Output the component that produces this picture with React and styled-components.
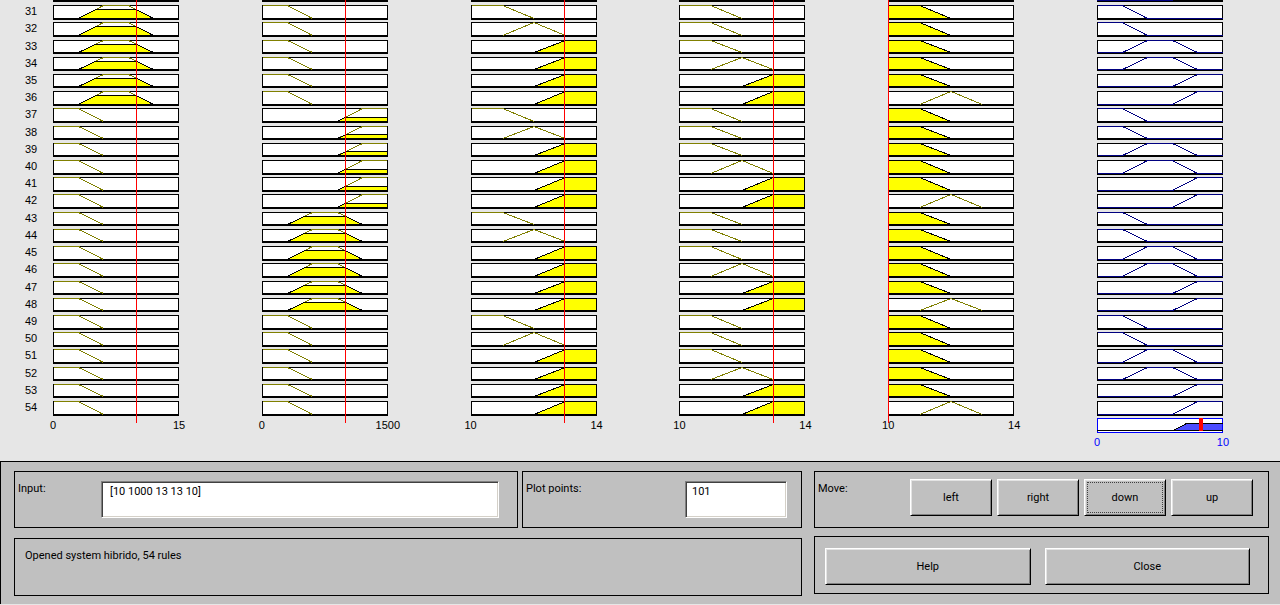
import React from "react";
import styled, { createGlobalStyle, css } from "styled-components";

const GlobalStyle = createGlobalStyle`
  *, *::before, *::after { box-sizing: border-box; }
  body {
    margin: 0;
    background: #e6e6e6;
    color: #000;
    font-family: "Liberation Sans", Arial, sans-serif;
    font-size: 11px;
    line-height: 14px;
  }
`;

const PLOT_WIDTH = 126;
const FIRST_RULE = 31;
const RULE_COUNT = 24;

/* Rules are spread evenly and rounded to whole pixels. */
const topOf = (i) => Math.round(5.08 + 17.217 * i);
const bottomOf = (i) => Math.round(19.61 + 17.217 * i);

const ROWS = Array.from({ length: RULE_COUNT }, (_, i) => ({
  rule: FIRST_RULE + i,
  height: bottomOf(i) - topOf(i),
  space: i < RULE_COUNT - 1 ? topOf(i + 1) - bottomOf(i) : 2,
}));

/* Membership functions as [position, degree] pairs, both from 0 to 1. */
const WIDE = {
  low: [[0, 1], [0.2, 1], [0.4, 0]],
  mid: [[0.2, 0], [0.4, 1], [0.6, 1], [0.8, 0]],
  high: [[0.6, 0], [0.8, 1], [1, 1]],
};
const NARROW = {
  low: [[0, 1], [0.25, 1], [0.5, 0]],
  mid: [[0.25, 0], [0.5, 1], [0.75, 0]],
  high: [[0.5, 0], [0.75, 1], [1, 1]],
};
const OUTPUT = {
  low: [[0, 1], [0.2, 1], [0.4, 0], [1, 0]],
  mid: [[0, 0], [0.2, 0], [0.4, 1], [0.6, 1], [0.8, 0], [1, 0]],
  high: [[0, 0], [0.6, 0], [0.8, 1], [1, 1]],
};

const cycle = (names) => Array.from({ length: RULE_COUNT }, (_, i) => names[i % names.length]);
const blocks = (names) => names.flatMap((name) => Array(6).fill(name));

const INPUTS = [
  { min: "0", max: "15", shapes: WIDE, marker: 83, fire: { mid: 2 / 3 }, terms: blocks(["mid", "low", "low", "low"]) },
  { min: "0", max: "1500", shapes: WIDE, marker: 83, fire: { mid: 2 / 3, high: 1 / 3 }, terms: blocks(["low", "high", "mid", "low"]) },
  { min: "10", max: "14", shapes: NARROW, marker: 93, fire: { high: 1 }, terms: cycle(["low", "mid", "high", "high", "high", "high"]) },
  { min: "10", max: "14", shapes: NARROW, marker: 94, fire: { high: 1 }, terms: cycle(["low", "low", "low", "mid", "high", "high"]) },
  { min: "10", max: "14", shapes: NARROW, marker: 0, fire: { low: 1 }, terms: cycle(["low", "low", "low", "low", "low", "mid"]) },
];
const OUTPUT_TERMS = cycle(["low", "low", "mid", "mid", "high", "high"]);

/* Cuts a membership function at a firing level. */
function clipAt(points, level) {
  const out = [];
  points.forEach(([x, y], i) => {
    if (i > 0) {
      const [px, py] = points[i - 1];
      if ((py - level) * (y - level) < 0) {
        out.push([px + ((x - px) * (level - py)) / (y - py), level]);
      }
    }
    out.push([x, Math.min(y, level)]);
  });
  return out;
}

const toPath = (points, h) =>
  points
    .map(([x, y], i) => `${i ? "L" : "M"}${0.5 + x * 125} ${0.5 + (1 - y) * (h - 2)}`)
    .join(" ");

const Window = styled.main`
  min-width: 1000px;
`;

const Charts = styled.section`
  display: flex;
  justify-content: space-between;
  min-height: 461px;
  padding: 0 57px 0 0;
`;

const RuleNumbers = styled.ol`
  list-style: none;
  width: 53px;
  margin: 0;
  padding: 4px 0 0 25px;
`;

const RuleNumber = styled.li`
  height: ${(p) => p.$height}px;
  margin-bottom: ${(p) => p.$space}px;
`;

const Columns = styled.div`
  flex: 1;
  display: flex;
  justify-content: space-between;
`;

const Column = styled.div`
  position: relative;
  width: ${PLOT_WIDTH}px;
`;

const Plot = styled.svg`
  display: block;
  margin-bottom: ${(p) => p.$space}px;
  shape-rendering: crispEdges;
`;

const Marker = styled.div`
  position: absolute;
  top: 0;
  left: ${(p) => p.$at}px;
  width: 1px;
  height: 423px;
  background: #f00;
`;

const Axis = styled.div`
  display: flex;
  justify-content: space-between;
  margin: 0 -20px;
  padding-top: ${(p) => (p.$output ? 2 : 0)}px;
  color: ${(p) => (p.$output ? "#00f" : "#000")};
`;

const Tick = styled.span`
  width: 40px;
  text-align: center;
`;

const Panel = styled.form`
  display: flex;
  align-items: flex-start;
  gap: 12px;
  padding: 9px 11px 8px 13px;
  background: #c0c0c0;
  border: solid #000;
  border-width: 1px 0 0 1px;
  box-shadow: 0 1px #d4d0c8;
  font-family: Roboto, "Liberation Sans", Arial, sans-serif;
`;

const Side = styled.div`
  flex: ${(p) => p.$grow} 1 0;
  display: flex;
  flex-direction: column;
  gap: ${(p) => p.$gap}px;
`;

const FrameRow = styled.div`
  display: grid;
  grid-template-columns: minmax(0, 504fr) minmax(0, 280fr);
  gap: 4px;
`;

const Frame = styled.div`
  display: flex;
  align-items: flex-start;
  min-height: 57px;
  padding: 9px ${(p) => p.$end}px 0 3px;
  border: 1px solid #000;
`;

const MoveFrame = styled(Frame)`
  padding-top: 7px;
`;

const Caption = styled.label`
  width: ${(p) => p.$width}px;
  padding-top: 1px;
`;

const MoveCaption = styled.span`
  flex: 1;
  padding-top: 3px;
`;

const Field = styled.input`
  flex: ${(p) => (p.$width ? "none" : 1)};
  width: ${(p) => (p.$width ? `${p.$width}px` : "auto")};
  min-width: 0;
  height: 37px;
  margin: 0 0 0 auto;
  padding: 2px 6px 19px;
  border: 1px solid;
  border-color: #808080 #fff #fff #808080;
  border-radius: 0;
  outline: none;
  background: #fff;
  box-shadow: inset 1px 1px #404040, inset -1px -1px #d4d0c8;
  font: inherit;
  color: inherit;
  ${(p) => !p.$width && css`padding-left: 8px;`}
`;

const Status = styled.output`
  display: block;
  min-height: 58px;
  padding: 10px;
  border: 1px solid #000;
`;

const Actions = styled.div`
  display: flex;
  gap: 14px;
  min-height: 58px;
  padding: 11px 18px 8px 10px;
  border: 1px solid #000;
`;

const ButtonGroup = styled.div`
  display: flex;
  gap: 5px;
`;

const Button = styled.button`
  flex: 1;
  min-width: 82px;
  height: 37px;
  margin: 0;
  padding: 0;
  border: 1px solid;
  border-color: #fff #000 #000 #fff;
  border-radius: 0;
  background: #c0c0c0;
  box-shadow: inset 1px 1px #e3e3e3, inset -1px -1px #808080;
  font: inherit;
  color: inherit;
  ${(p) =>
    p.$focused &&
    css`
      outline: 1px dotted #404040;
      outline-offset: -4px;
    `}
`;

function RulePlot({ shape, row, level = 0, color }) {
  const h = row.height;
  const cut = clipAt(shape, level);
  const first = shape[0][0];
  const last = shape[shape.length - 1][0];
  return (
    <Plot width={PLOT_WIDTH} height={h} $space={row.space} aria-hidden="true">
      <rect width={PLOT_WIDTH} height={h} fill="#000" />
      <rect x="1" y="1" width={PLOT_WIDTH - 2} height={h - 3} fill="#fff" />
      {level < 1 && <path d={toPath(shape, h)} fill="none" stroke={color} />}
      {level > 0 && (
        <>
          <path d={toPath([[first, 0], ...cut, [last, 0]], h)} fill="#ff0" />
          <path d={toPath(cut, h)} fill="none" stroke="#000" />
          <path d={`M${PLOT_WIDTH - 0.5} 0V${h}M0 ${h - 1.5}H${PLOT_WIDTH}`} stroke="#000" />
        </>
      )}
    </Plot>
  );
}

/* Lower edge of the rule that is scrolled out above the first full row. */
function CutOffPlot({ output }) {
  return (
    <Plot width={PLOT_WIDTH} height="2" $space={3} aria-hidden="true">
      <rect width={PLOT_WIDTH} height="2" fill="#000" />
      {output && <rect width="76" height="1" fill="#000080" />}
    </Plot>
  );
}

function InputColumn({ variable }) {
  return (
    <Column>
      <CutOffPlot />
      {ROWS.map((row, i) => {
        const term = variable.terms[i];
        return (
          <RulePlot
            key={row.rule}
            row={row}
            shape={variable.shapes[term]}
            level={variable.fire[term]}
            color="#808000"
          />
        );
      })}
      <Marker $at={variable.marker} />
      <Axis>
        <Tick>{variable.min}</Tick>
        <Tick>{variable.max}</Tick>
      </Axis>
    </Column>
  );
}

function OutputColumn() {
  return (
    <Column>
      <CutOffPlot output />
      {ROWS.map((row, i) => (
        <RulePlot key={row.rule} row={row} shape={OUTPUT[OUTPUT_TERMS[i]]} color="#000080" />
      ))}
      <Plot width={PLOT_WIDTH} height="15" $space={0} aria-hidden="true">
        <rect width={PLOT_WIDTH} height="15" fill="#00f" />
        <rect x="1" y="1" width={PLOT_WIDTH - 2} height="13" fill="#fff" />
        <path d="M76 12.5L90 5.5H125V12.5Z" fill="#4d4dff" />
        <path d="M0 12.5H126M76.5 12.5L89.5 5.5H126" fill="none" stroke="#000" />
        <rect x="102" y="0" width="4" height="13" fill="#f00" />
      </Plot>
      <Axis $output>
        <Tick>0</Tick>
        <Tick>10</Tick>
      </Axis>
    </Column>
  );
}

export default function App() {
  return (
    <Window>
      <GlobalStyle />
      <Charts>
        <RuleNumbers>
          {ROWS.map((row) => (
            <RuleNumber key={row.rule} $height={row.height} $space={row.space}>
              {row.rule}
            </RuleNumber>
          ))}
        </RuleNumbers>
        <Columns>
          {INPUTS.map((variable, i) => (
            <InputColumn key={i} variable={variable} />
          ))}
          <OutputColumn />
        </Columns>
      </Charts>
      <Panel onSubmit={(e) => e.preventDefault()}>
        <Side $grow={788} $gap={10}>
          <FrameRow>
            <Frame $end={18}>
              <Caption htmlFor="input" $width={83}>Input:</Caption>
              <Field id="input" defaultValue="[10 1000 13 13 10]" />
            </Frame>
            <Frame $end={14}>
              <Caption htmlFor="points" $width={120}>Plot points:</Caption>
              <Field id="points" $width={102} defaultValue="101" />
            </Frame>
          </FrameRow>
          <Status>Opened system hibrido, 54 rules</Status>
        </Side>
        <Side $grow={455} $gap={8}>
          <MoveFrame $end={15}>
            <MoveCaption>Move:</MoveCaption>
            <ButtonGroup>
              <Button type="button">left</Button>
              <Button type="button">right</Button>
              <Button type="button" $focused>down</Button>
              <Button type="button">up</Button>
            </ButtonGroup>
          </MoveFrame>
          <Actions>
            <Button type="button">Help</Button>
            <Button type="button">Close</Button>
          </Actions>
        </Side>
      </Panel>
    </Window>
  );
}
